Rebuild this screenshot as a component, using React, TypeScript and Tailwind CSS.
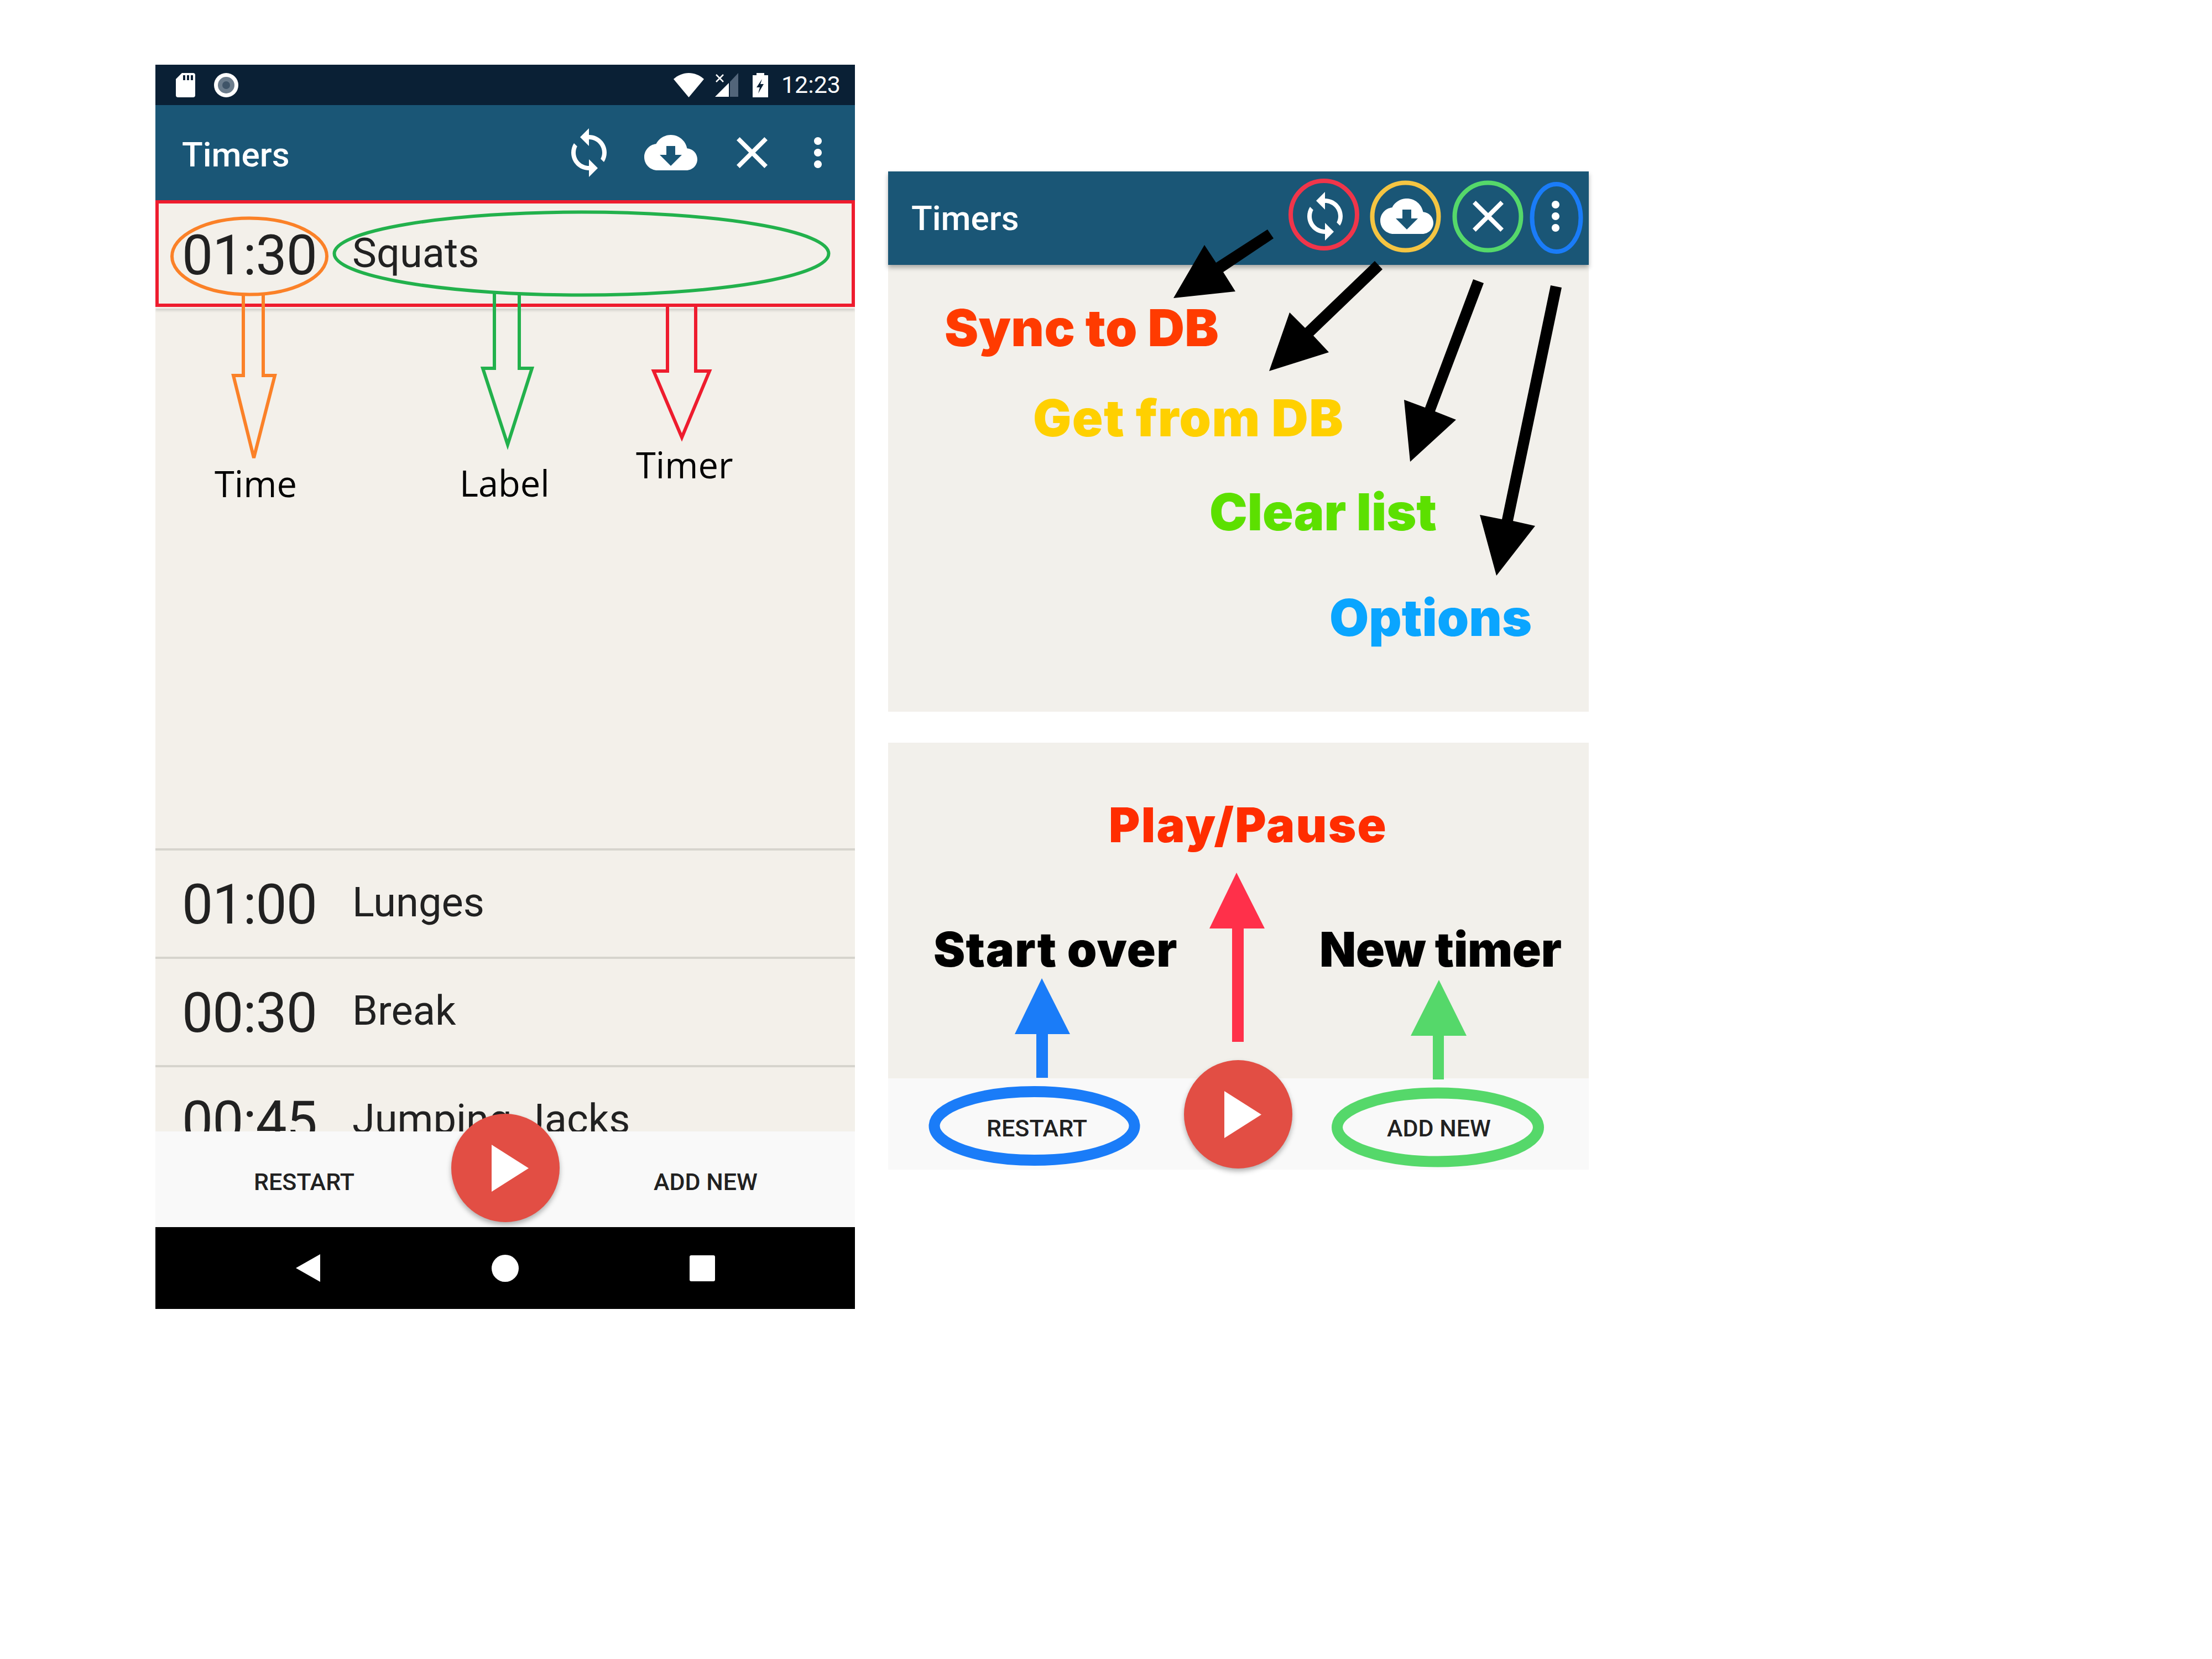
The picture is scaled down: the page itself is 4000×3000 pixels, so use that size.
import React from "react";

const SYNC = "M12 4V1L8 5l4 4V6c3.31 0 6 2.69 6 6 0 1.01-.25 1.97-.7 2.8l1.46 1.46C19.54 15.03 20 13.57 20 12c0-4.42-3.58-8-8-8zm0 14c-3.31 0-6-2.69-6-6 0-1.01.25-1.97.7-2.8L5.24 7.74C4.46 8.97 4 10.43 4 12c0 4.42 3.58 8 8 8v3l4-4-4-4v3z";
const CLOUD = "M19.35 10.04C18.67 6.59 15.64 4 12 4 9.11 4 6.6 5.64 5.35 8.04 2.34 8.36 0 10.91 0 14c0 3.31 2.69 6 6 6h13c2.76 0 5-2.24 5-5 0-2.64-2.05-4.78-4.65-4.96zM17 13l-5 5-5-5h3V9h4v4h3z";
const CLOSE = "M19 6.41L17.59 5 12 10.59 6.41 5 5 6.41 10.59 12 5 17.59 6.41 19 12 13.41 17.59 19 19 17.59 13.41 12z";
const MORE = "M12 8c1.1 0 2-.9 2-2s-.9-2-2-2-2 .9-2 2 .9 2 2 2zm0 2c-1.1 0-2 .9-2 2s.9 2 2 2 2-.9 2-2-.9-2-2-2zm0 6c-1.1 0-2 .9-2 2s.9 2 2 2 2-.9 2-2-.9-2-2-2z";

function Mi({ d, className }: { d: string; className: string }) {
  return (
    <svg viewBox="0 0 24 24" fill="white" className={className}>
      <path d={d} />
    </svg>
  );
}

function AppBar({ extra, title, icons, more }: { extra: string; title: string; icons: string; more: string }) {
  return (
    <div className={"relative z-10 flex items-center bg-[#1a5676] text-white " + extra}>
      <span className={"text-[62px] font-medium leading-none " + title}>Timers</span>
      <div className={"ml-auto flex items-center " + icons}>
        <Mi d={SYNC} className="h-[96px] w-[96px]" />
        <Mi d={CLOUD} className="ml-[52px] h-[96px] w-[96px]" />
        <Mi d={CLOSE} className="ml-[51px] h-[96px] w-[96px]" />
        <Mi d={MORE} className={"h-[84px] w-[84px] " + more} />
      </div>
    </div>
  );
}

function Row({ time, label, extra }: { time: string; label: string; extra: string }) {
  return (
    <div className={"flex shrink-0 items-center pl-[48px] pt-[4px] text-[#212121] " + extra}>
      <span className="w-[308px] text-[100px] leading-none tracking-[-1px]">{time}</span>
      <span className="mt-[-8px] text-[74px] leading-none">{label}</span>
    </div>
  );
}

function Play({ className }: { className: string }) {
  return (
    <div className={"flex h-[196px] w-[196px] items-center justify-center rounded-full bg-[#e24e44] shadow-[0_5px_10px_rgba(0,0,0,0.3)] " + className}>
      <svg viewBox="0 0 67 85" className="ml-[17px] h-[85px] w-[67px]" fill="white">
        <path d="M0 0L67 42.5L0 85Z" />
      </svg>
    </div>
  );
}

function Fancy({ className, children }: { className: string; children: React.ReactNode }) {
  return <span className={"absolute z-20 whitespace-nowrap font-['Inter',sans-serif] font-black leading-none " + className}>{children}</span>;
}

function Note({ className, children }: { className: string; children: React.ReactNode }) {
  return <span className={"absolute whitespace-nowrap font-['Open_Sans',sans-serif] text-[65px] leading-none text-black " + className}>{children}</span>;
}

export default function App() {
  return (
    <div className="relative flex h-[3000px] w-[4000px] items-start gap-[60px] bg-white pl-[281px] pt-[117px] font-[Roboto,sans-serif]">
      {/* Phone */}
      <div className="relative flex h-[2250px] w-[1265px] flex-col">
        <div className="flex h-[73px] shrink-0 items-center bg-[#0a2035] pl-[37px] pr-[26px]">
          <svg viewBox="0 0 35 44" className="h-[44px] w-[35px]">
            <path d="M11 0H31a4 4 0 0 1 4 4V40a4 4 0 0 1-4 4H4a4 4 0 0 1-4-4V11Z" fill="white" />
            <path d="M13 4h4v9h-4zM20 4h4v9h-4zM27 4h4v9h-4z" fill="#0a2035" />
          </svg>
          <svg viewBox="0 0 44 44" className="ml-[34px] h-[44px] w-[44px]">
            <circle cx="22" cy="22" r="22" fill="white" />
            <circle cx="22" cy="22" r="15" fill="#6b7c8c" />
            <circle cx="22" cy="22" r="7" fill="#3f5468" />
          </svg>
          <svg viewBox="0 0 55 44" className="ml-auto h-[44px] w-[55px]">
            <path d="M0 11C8 4 17 0 27.500 0S47 4 55 11L27.500 44Z" fill="white" />
          </svg>
          <svg viewBox="0 0 42 43" className="ml-[20px] h-[43px] w-[42px]">
            <path d="M25 18V43H0Z" fill="white" />
            <path d="M27 43V16L42 0V43Z" fill="#52657a" />
            <path d="M2 3L15 16M15 3L2 16" stroke="white" strokeWidth="2.500" />
          </svg>
          <svg viewBox="0 0 28 44" className="ml-[26px] h-[44px] w-[28px]">
            <path d="M7 0H21V4H28V44H0V4H7Z" fill="white" />
            <path d="M17 11L7 26H13L10 37L20 20H14Z" fill="#0a2035" />
          </svg>
          <span className="ml-[24px] text-[43px] leading-none text-white">12:23</span>
        </div>
        <AppBar extra="h-[172px] shrink-0 pl-[48px] pr-[25px]" title="mt-[8px]" icons="" more="ml-[29px]" />
        <div className="flex min-h-0 flex-1 flex-col overflow-hidden bg-[#f3f0ea]">
          <Row time="01:30" label="Squats" extra="h-[196px] shadow-[0_4px_4px_rgba(0,0,0,0.12)]" />
          <div className="h-[976px] shrink-0" />
          <Row time="01:00" label="Lunges" extra="h-[196px] border-t-[4px] border-[#d6d4cd]" />
          <Row time="00:30" label="Break" extra="h-[196px] border-t-[4px] border-[#d6d4cd]" />
          <Row time="00:45" label="Jumping Jacks" extra="h-[196px] border-t-[4px] border-[#d6d4cd]" />
        </div>
        <div className="flex h-[173px] shrink-0 items-center bg-[#f9f9f9] pl-[178px] pt-[10px] text-[43px] font-medium leading-none text-[#212121]">
          <span>RESTART</span>
          <span className="ml-[541px]">ADD NEW</span>
        </div>
        <div className="flex h-[148px] shrink-0 items-center justify-center bg-black">
          <svg viewBox="0 0 44 50" className="h-[50px] w-[44px]" fill="white">
            <path d="M44 0V50L0 25Z" />
          </svg>
          <div className="ml-[310px] h-[49px] w-[49px] rounded-full bg-white" />
          <div className="ml-[309px] h-[47px] w-[46px] rounded-[3px] bg-white" />
        </div>
        <Play className="absolute left-[535px] top-[1897px]" />
      </div>

      {/* Right column */}
      <div className="mt-[193px] flex w-[1267px] flex-col gap-[56px]">
        <div className="flex h-[977px] flex-col bg-[#f2f0eb]">
          <AppBar extra="h-[169px] shrink-0 pl-[42px] pr-[18px] shadow-[0_5px_8px_rgba(0,0,0,0.3)]" title="" icons="mb-[8px]" more="ml-[32px]" />
        </div>
        <div className="flex h-[772px] flex-col bg-[#f2f0eb]">
          <div className="relative mt-auto flex h-[165px] items-center bg-[#f9f9f9] pl-[178px] pt-[15px] text-[43px] font-medium leading-none text-[#212121]">
            <span>RESTART</span>
            <span className="ml-[542px]">ADD NEW</span>
            <Play className="absolute left-[535px] top-[-33px]" />
          </div>
        </div>
      </div>

      {/* Annotation layer */}
      <svg viewBox="0 0 4000 3000" className="pointer-events-none absolute left-0 top-0 z-20 h-[3000px] w-[4000px]" fill="none">
        <rect x="284" y="365" width="1259" height="187" stroke="#ee1c2e" strokeWidth="6" />
        <ellipse cx="451" cy="463.500" rx="140" ry="69" stroke="#fb8128" strokeWidth="6" />
        <ellipse cx="1051.500" cy="458.500" rx="447" ry="75" stroke="#22b14c" strokeWidth="6" />
        <path d="M440 532V679H422L459 828L497 679H476V532" stroke="#fb8128" strokeWidth="6" />
        <path d="M894 530V666H873L918 804L962 666H939V530" stroke="#22b14c" strokeWidth="6" />
        <path d="M1207 555V671H1182L1233 791L1283 671H1258V555" stroke="#ee1c2e" strokeWidth="6" />

        <ellipse cx="2394" cy="388" rx="60" ry="61" stroke="#f0354a" strokeWidth="8" />
        <ellipse cx="2541.500" cy="391.500" rx="60" ry="61" stroke="#f5c542" strokeWidth="8" />
        <ellipse cx="2690.500" cy="391.500" rx="60" ry="61" stroke="#55d86a" strokeWidth="8" />
        <ellipse cx="2814.500" cy="394" rx="44" ry="61" stroke="#1a7cf8" strokeWidth="8" />
        <polygon points="2292,415 2303,431 2212,492 2234,527 2122,539 2178,443 2199,475" fill="black" />
        <polygon points="2486,472 2500,487 2375,607 2403,637 2295,671 2332,565 2360,593" fill="black" />
        <polygon points="2664,505 2683,512 2595,744 2633,759 2550,835 2539,723 2577,737" fill="black" />
        <polygon points="2804,516 2824,520 2736,942 2776,951 2706,1041 2676,931 2716,939" fill="black" />

        <ellipse cx="1870.500" cy="2036" rx="181" ry="62" stroke="#1a7cf8" strokeWidth="20" />
        <ellipse cx="2600" cy="2038.500" rx="182" ry="62" stroke="#55d86a" strokeWidth="20" />
        <polygon points="1884,1769 1935,1870 1895,1870 1895,1949 1874,1949 1874,1870 1835,1870" fill="#1a7cf8" />
        <polygon points="2236,1578 2287,1679 2249,1679 2249,1884 2228,1884 2228,1679 2187,1679" fill="#ff304a" />
        <polygon points="2602,1772 2652,1873 2611,1873 2611,1952 2591,1952 2591,1873 2551,1873" fill="#55d86a" />
      </svg>

      <Note className="left-[388px] top-[842px]">Time</Note>
      <Note className="left-[831px] top-[841px]">Label</Note>
      <Note className="left-[1150px] top-[808px]">Timer</Note>

      <Fancy className="left-[1708px] top-[547px] text-[92px] tracking-[0.3px] text-[#ff3b00]">Sync to DB</Fancy>
      <Fancy className="left-[1868px] top-[710px] text-[92px] tracking-[1.4px] text-[#ffd000]">Get from DB</Fancy>
      <Fancy className="left-[2187px] top-[880px] text-[92px] text-[#5ce000]">Clear list</Fancy>
      <Fancy className="left-[2404px] top-[1071px] text-[92px] text-[#0aa5ff]">Options</Fancy>
      <Fancy className="left-[2005px] top-[1449px] text-[86px] tracking-[2.300px] text-[#ff2d00]">Play/Pause</Fancy>
      <Fancy className="left-[1688px] top-[1674px] text-[86px] tracking-[1.300px] text-black">Start over</Fancy>
      <Fancy className="left-[2386px] top-[1674px] text-[86px] tracking-[-0.3px] text-black">New timer</Fancy>
    </div>
  );
}
